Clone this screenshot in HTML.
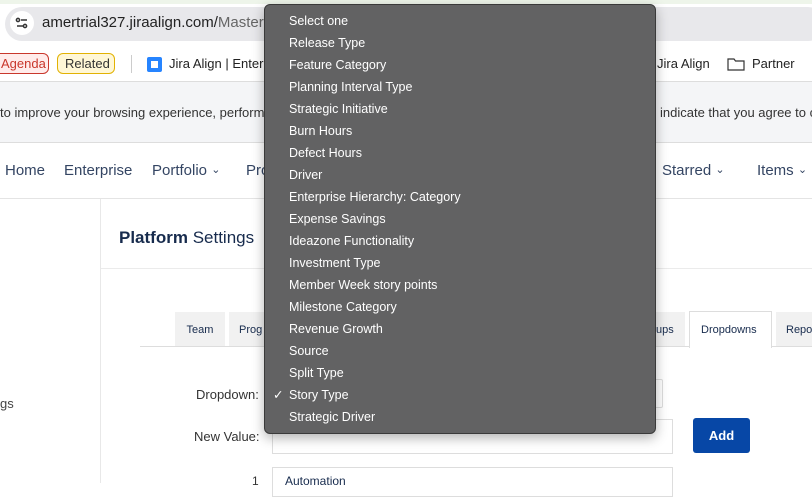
<!DOCTYPE html>
<html><head><style>
*{margin:0;padding:0;box-sizing:border-box}
body{width:812px;height:483px;overflow:hidden;position:relative;background:#fff;font-family:"Liberation Sans",sans-serif;color:#172b4d}
.a{position:absolute;white-space:nowrap}
.ch{font-size:11px;vertical-align:2px}
</style></head><body>
<div class="a" style="left:0;top:0;width:812px;height:4px;background:#eef5ea"></div>
<div class="a" style="left:0;top:4px;width:812px;height:44px;background:#fff"></div>
<div class="a" style="left:5px;top:7px;width:820px;height:34px;border-radius:17px;background:#e8e8eb"></div>
<div class="a" style="left:10px;top:11px;width:24px;height:24px;border-radius:12px;background:#fff"></div>
<svg class="a" style="left:14px;top:15px" width="16" height="16" viewBox="0 0 16 16" fill="none" stroke="#333" stroke-width="1.5"><circle cx="4" cy="5" r="1.6"/><line x1="7" y1="5" x2="13" y2="5"/><circle cx="11" cy="11" r="1.6"/><line x1="3" y1="11" x2="9" y2="11"/></svg>
<div class="a" style="left:42px;top:14px;font-size:15px;color:#222">amertrial327.jiraalign.com/<span style="color:#666">Master</span></div>
<div class="a" style="left:-8px;top:53px;width:57px;height:21px;border:1px solid #c9372c;border-radius:6px;background:#ffeceb;color:#c9372c;font-size:13px;padding:2px 0 0 8px">Agenda</div>
<div class="a" style="left:57px;top:53px;width:58px;height:21px;border:1px solid #e2b203;border-radius:6px;background:#fff7d6;color:#333;font-size:13px;padding:2px 0 0 7px">Related</div>
<div class="a" style="left:131px;top:55px;width:1px;height:18px;background:#ccc"></div>
<div class="a" style="left:147px;top:57px;width:15px;height:15px;background:#2684ff;border-radius:2px"><div style="position:absolute;left:4px;top:4px;width:7px;height:7px;background:#fff"></div></div>
<div class="a" style="left:169px;top:56px;font-size:13px;color:#222">Jira Align | Enterp</div>
<div class="a" style="left:657px;top:56px;font-size:13px;color:#222">Jira Align</div>
<svg class="a" style="left:727px;top:57px" width="18" height="14" viewBox="0 0 18 14" fill="none" stroke="#333" stroke-width="1.2"><path d="M1 2h6l1.5 2H17v9H1z"/></svg>
<div class="a" style="left:752px;top:56px;font-size:13px;color:#222">Partner</div>
<div class="a" style="left:0;top:81px;width:812px;height:62px;background:#f4f5f7;border-top:1px solid #ddd;border-bottom:1px solid #ddd"></div>
<div class="a" style="left:0;top:105px;font-size:13px;color:#333">to improve your browsing experience, perform a</div>
<div class="a" style="left:660px;top:105px;font-size:13px;color:#333">indicate that you agree to c</div>
<div class="a" style="left:0;top:198px;width:812px;height:1px;background:#e4e4e4"></div>
<div class="a" style="left:5px;top:162px;font-size:15px;color:#344563">Home</div>
<div class="a" style="left:64px;top:162px;font-size:15px;color:#344563">Enterprise</div>
<div class="a" style="left:152px;top:162px;font-size:15px;color:#344563">Portfolio <span class="ch">⌄</span></div>
<div class="a" style="left:246px;top:162px;font-size:15px;color:#344563">Pro</div>
<div class="a" style="left:662px;top:162px;font-size:15px;color:#344563">Starred <span class="ch">⌄</span></div>
<div class="a" style="left:757px;top:162px;font-size:15px;color:#344563">Items <span class="ch">⌄</span></div>
<div class="a" style="left:100px;top:199px;width:1px;height:284px;background:#e8e8e8"></div>
<div class="a" style="left:0;top:396px;font-size:13px;color:#444">gs</div>
<div class="a" style="left:119px;top:228px;font-size:17px;color:#172b4d"><b>Platform</b> Settings</div>
<div class="a" style="left:101px;top:268px;width:711px;height:1px;background:#ebebeb"></div>
<div class="a" style="left:140px;top:346px;width:672px;height:1px;background:#ddd"></div>
<div class="a" style="left:175px;top:312px;width:50px;height:34px;background:#f1f1f1;font-size:11px;padding-top:12px;text-align:center">Team</div>
<div class="a" style="left:229px;top:312px;width:60px;height:34px;background:#f1f1f1;font-size:11px;padding:12px 0 0 10px">Prog</div>
<div class="a" style="left:620px;top:312px;width:65px;height:34px;background:#f1f1f1;font-size:11px;padding:12px 0 0 36px">ups</div>
<div class="a" style="left:689px;top:311px;width:83px;height:37px;background:#fff;border:1px solid #ddd;border-bottom:none;font-size:11px;padding:12px 0 0 11px">Dropdowns</div>
<div class="a" style="left:776px;top:312px;width:50px;height:34px;background:#f1f1f1;font-size:11px;padding:12px 0 0 10px">Repo</div>
<div class="a" style="left:196px;top:387px;font-size:13px;color:#333">Dropdown:</div>
<div class="a" style="left:600px;top:379px;width:63px;height:29px;border:1px solid #ddd;border-radius:2px"></div>
<div class="a" style="left:194px;top:429px;font-size:13px;color:#333">New Value:</div>
<div class="a" style="left:272px;top:419px;width:401px;height:35px;border:1px solid #ddd"></div>
<div class="a" style="left:693px;top:418px;width:57px;height:35px;background:#0747a6;border-radius:3px;color:#fff;font-size:13px;font-weight:bold;text-align:center;padding-top:10px">Add</div>
<div class="a" style="left:252px;top:474px;font-size:12px;color:#333">1</div>
<div class="a" style="left:272px;top:467px;width:401px;height:30px;border:1px solid #ddd;font-size:12px;padding:6px 0 0 12px">Automation</div>
<div class="a" style="left:264px;top:4px;width:392px;height:430px;background:#626263;border:1px solid #3a3a3a;border-radius:6px;box-shadow:0 4px 12px rgba(0,0,0,.3);color:#fff;font-size:12.5px">
<div style="position:absolute;left:24px;top:5px;line-height:22px">Select one<br>Release Type<br>Feature Category<br>Planning Interval Type<br>Strategic Initiative<br>Burn Hours<br>Defect Hours<br>Driver<br>Enterprise Hierarchy: Category<br>Expense Savings<br>Ideazone Functionality<br>Investment Type<br>Member Week story points<br>Milestone Category<br>Revenue Growth<br>Source<br>Split Type<br>Story Type<br>Strategic Driver</div>
<div style="position:absolute;left:8px;top:379px;line-height:22px">✓</div>
</div>
</body></html>
